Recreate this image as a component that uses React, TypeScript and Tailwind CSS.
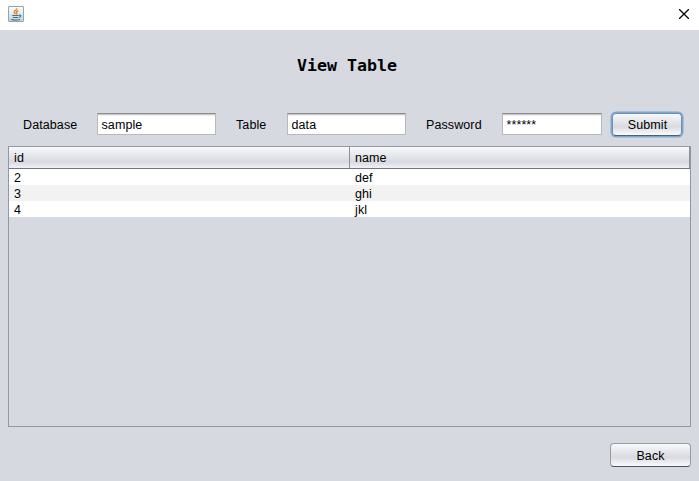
import React from "react";

const rows = [
  { id: "2", name: "def" },
  { id: "3", name: "ghi" },
  { id: "4", name: "jkl" },
];

function JavaIcon() {
  return (
    <svg width="16" height="16" viewBox="0 0 16 16" fill="none">
      <defs>
        <linearGradient id="tile" x1="0" y1="0" x2="0" y2="1">
          <stop offset="0" stopColor="#ffffff" />
          <stop offset="1" stopColor="#c3d0d9" />
        </linearGradient>
      </defs>
      <rect x="0.5" y="0.5" width="15" height="15" rx="0.5" fill="url(#tile)" stroke="#8fa6b4" />
      <path d="M8.8 2.2C9.3 4 6.1 4.6 6.2 6.2C6.3 7 7.3 7.5 7.6 8.3M10.4 4.7C8.3 5.6 8.2 6.1 8.8 7.1C9 7.6 8.8 8 8.4 8.4" stroke="#f07f18" strokeWidth="1.35" />
      <path d="M4.2 9.5H10.8M4.8 11.4H10.2M3.2 13.5C5.5 14.1 9.5 14 12 13.4M11 9.2C13.8 8.7 13.2 11 11 11.3" stroke="#41708f" strokeWidth="1.05" />
    </svg>
  );
}

function Field({ value, className = "" }: { value: string; className?: string }) {
  return (
    <div
      className={`h-[22px] shrink-0 border border-[#b8b9bd] border-t-[#8b8c90] bg-white pt-px pl-[3.5px] leading-[21px] shadow-[inset_0_1px_0_#c7c7c9,inset_0_2px_0_#f0f0f0] ${className}`}
    >
      {value}
    </div>
  );
}

export default function App() {
  return (
    <div className="flex h-[481px] w-[699px] flex-col overflow-hidden bg-[#d6d9e0] font-['Liberation_Sans',Arial,sans-serif] text-[12.5px] tracking-[0.1px] text-black">
      <header className="flex h-[30px] shrink-0 justify-between bg-white pt-[6px] pr-[10px] pl-2">
        <JavaIcon />
        <svg className="mt-[3px]" width="10" height="10" viewBox="0 0 10 10">
          <path d="M0 0L10 10M10 0L0 10" stroke="#000" strokeWidth="1.25" />
        </svg>
      </header>

      <h1 className="mt-[26px] h-5 shrink-0 pr-[5px] text-center font-['DejaVu_Sans_Mono',monospace] text-[16.6px] leading-5 font-bold tracking-normal">
        View Table
      </h1>

      <div className="mt-[35px] flex h-[26px] shrink-0 items-center pl-[23px]">
        <label className="w-[74px] pt-[2px]">Database</label>
        <Field value="sample" className="w-[119px]" />
        <label className="ml-5 w-[51px] pt-[2px]">Table</label>
        <Field value="data" className="w-[119px]" />
        <label className="ml-5 w-[76px] pt-[2px]">Password</label>
        <Field value="******" className="w-[100px]" />
        <button className="ml-[10px] h-[23px] w-[70px] rounded-[4px] border border-[#6f8fb0] border-b-[#4f6070] bg-linear-to-b from-[#f8f9fb] via-[#d8dae0] via-60% to-[#fafbff] pt-px pl-px leading-[21px] shadow-[0_0_0_1.5px_#79a8d3]">
          Submit
        </button>
      </div>

      <main className="mt-[9px] ml-2 h-[281px] w-[683px] shrink-0 border border-[#9297a1]">
        <div className="grid h-[22px] grid-cols-[341px_340px] border-b border-[#72757f] bg-linear-to-b from-[#f8f9fb] from-0% via-[#d8dae0] via-70% to-[#eff0f8] leading-[20px]">
          <div className="border-r border-[#8c9099] pt-px pl-[5px]">id</div>
          <div className="border-r border-[#8c9099] pt-px pl-[5px]">name</div>
        </div>
        <div>
          {rows.map((row) => (
            <div key={row.id} className="grid h-4 grid-cols-[341px_340px] bg-white leading-4 even:bg-[#f2f2f2]">
              <div className="h-4 pt-px pl-[5px]">{row.id}</div>
              <div className="h-4 pt-px pl-[5px]">{row.name}</div>
            </div>
          ))}
        </div>
      </main>

      <footer className="mt-4 flex justify-end pr-2">
        <button className="h-6 w-[81px] rounded-[4px] border border-[#989ba2] border-b-[#4e5158] bg-linear-to-b from-[#f8f9fb] via-[#d8dae0] via-60% to-[#fafbff] pt-px leading-[22px]">
          Back
        </button>
      </footer>
    </div>
  );
}
